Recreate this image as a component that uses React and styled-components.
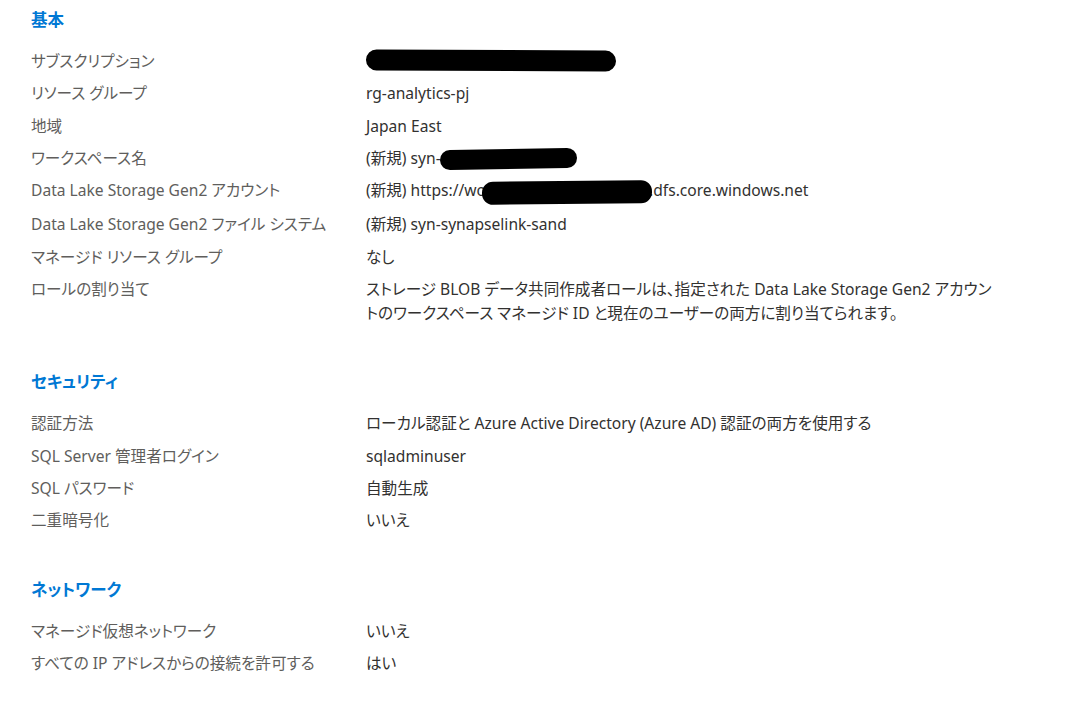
import React from 'react';
import styled, { createGlobalStyle } from 'styled-components';

const GlobalStyle = createGlobalStyle`
  body {
    margin: 0;
    background: #ffffff;
    font-family: "Noto Sans", "Noto Sans CJK JP", sans-serif;
    font-feature-settings: "palt";
  }
`;

const Page = styled.div`
  padding: 8px 31px 20px;
`;

const Section = styled.section`
  margin-bottom: 45.5px;
`;

const Heading = styled.h2`
  margin: 0 0 17px;
  font-size: 16.5px;
  line-height: 24px;
  font-weight: 700;
  color: #0078d4;
`;

const Rows = styled.div`
  display: grid;
  grid-template-columns: 335px 1fr;
  row-gap: 8.3px;
  font-size: 15.6px;
  line-height: 24px;
`;

const Label = styled.div`
  color: #605e5c;
  white-space: nowrap;
`;

const Value = styled.div`
  color: #323130;
  white-space: nowrap;
`;

// hand-drawn black marker over hidden parts of the value
const Redaction = styled.span`
  display: inline-block;
  vertical-align: middle;
  width: ${(p) => p.w}px;
  height: ${(p) => p.h || 21}px;
  margin-left: ${(p) => p.ml || 0}px;
  margin-right: ${(p) => p.mr || 0}px;
  margin-top: ${(p) => p.mt || 0}px;
  background: #000;
  border-radius: 11px;
  transform: rotate(${(p) => p.rot || 0}deg);
`;

const basics = [
  ['サブスクリプション', <Redaction w={250} mt={-4} rot={0.3} />],
  ['リソース グループ', 'rg-analytics-pj'],
  ['地域', 'Japan East'],
  ['ワークスペース名', <>(新規) syn-<Redaction w={137} h={20} ml={-1} mt={-2} rot={-1} /></>],
  [
    'Data Lake Storage Gen2 アカウント',
    <>(新規) https://wo<Redaction w={170} h={23} ml={-4} mr={-3} mt={1} rot={-0.6} />.dfs.core.windows.net</>,
  ],
  ['Data Lake Storage Gen2 ファイル システム', '(新規) syn-synapselink-sand'],
  ['マネージド リソース グループ', 'なし'],
  [
    'ロールの割り当て',
    <>
      ストレージ BLOB データ共同作成者ロールは、指定された Data Lake Storage Gen2 アカウン
      <br />
      トのワークスペース マネージド ID と現在のユーザーの両方に割り当てられます。
    </>,
  ],
];

const security = [
  ['認証方法', 'ローカル認証と Azure Active Directory (Azure AD) 認証の両方を使用する'],
  ['SQL Server 管理者ログイン', 'sqladminuser'],
  ['SQL パスワード', '自動生成'],
  ['二重暗号化', 'いいえ'],
];

const network = [
  ['マネージド仮想ネットワーク', 'いいえ'],
  ['すべての IP アドレスからの接続を許可する', 'はい'],
];

function Summary({ title, items }) {
  return (
    <Section>
      <Heading>{title}</Heading>
      <Rows>
        {items.map(([label, value], i) => (
          <React.Fragment key={i}>
            <Label>{label}</Label>
            <Value>{value}</Value>
          </React.Fragment>
        ))}
      </Rows>
    </Section>
  );
}

export default function App() {
  return (
    <Page>
      <GlobalStyle />
      <Summary title="基本" items={basics} />
      <Summary title="セキュリティ" items={security} />
      <Summary title="ネットワーク" items={network} />
    </Page>
  );
}
